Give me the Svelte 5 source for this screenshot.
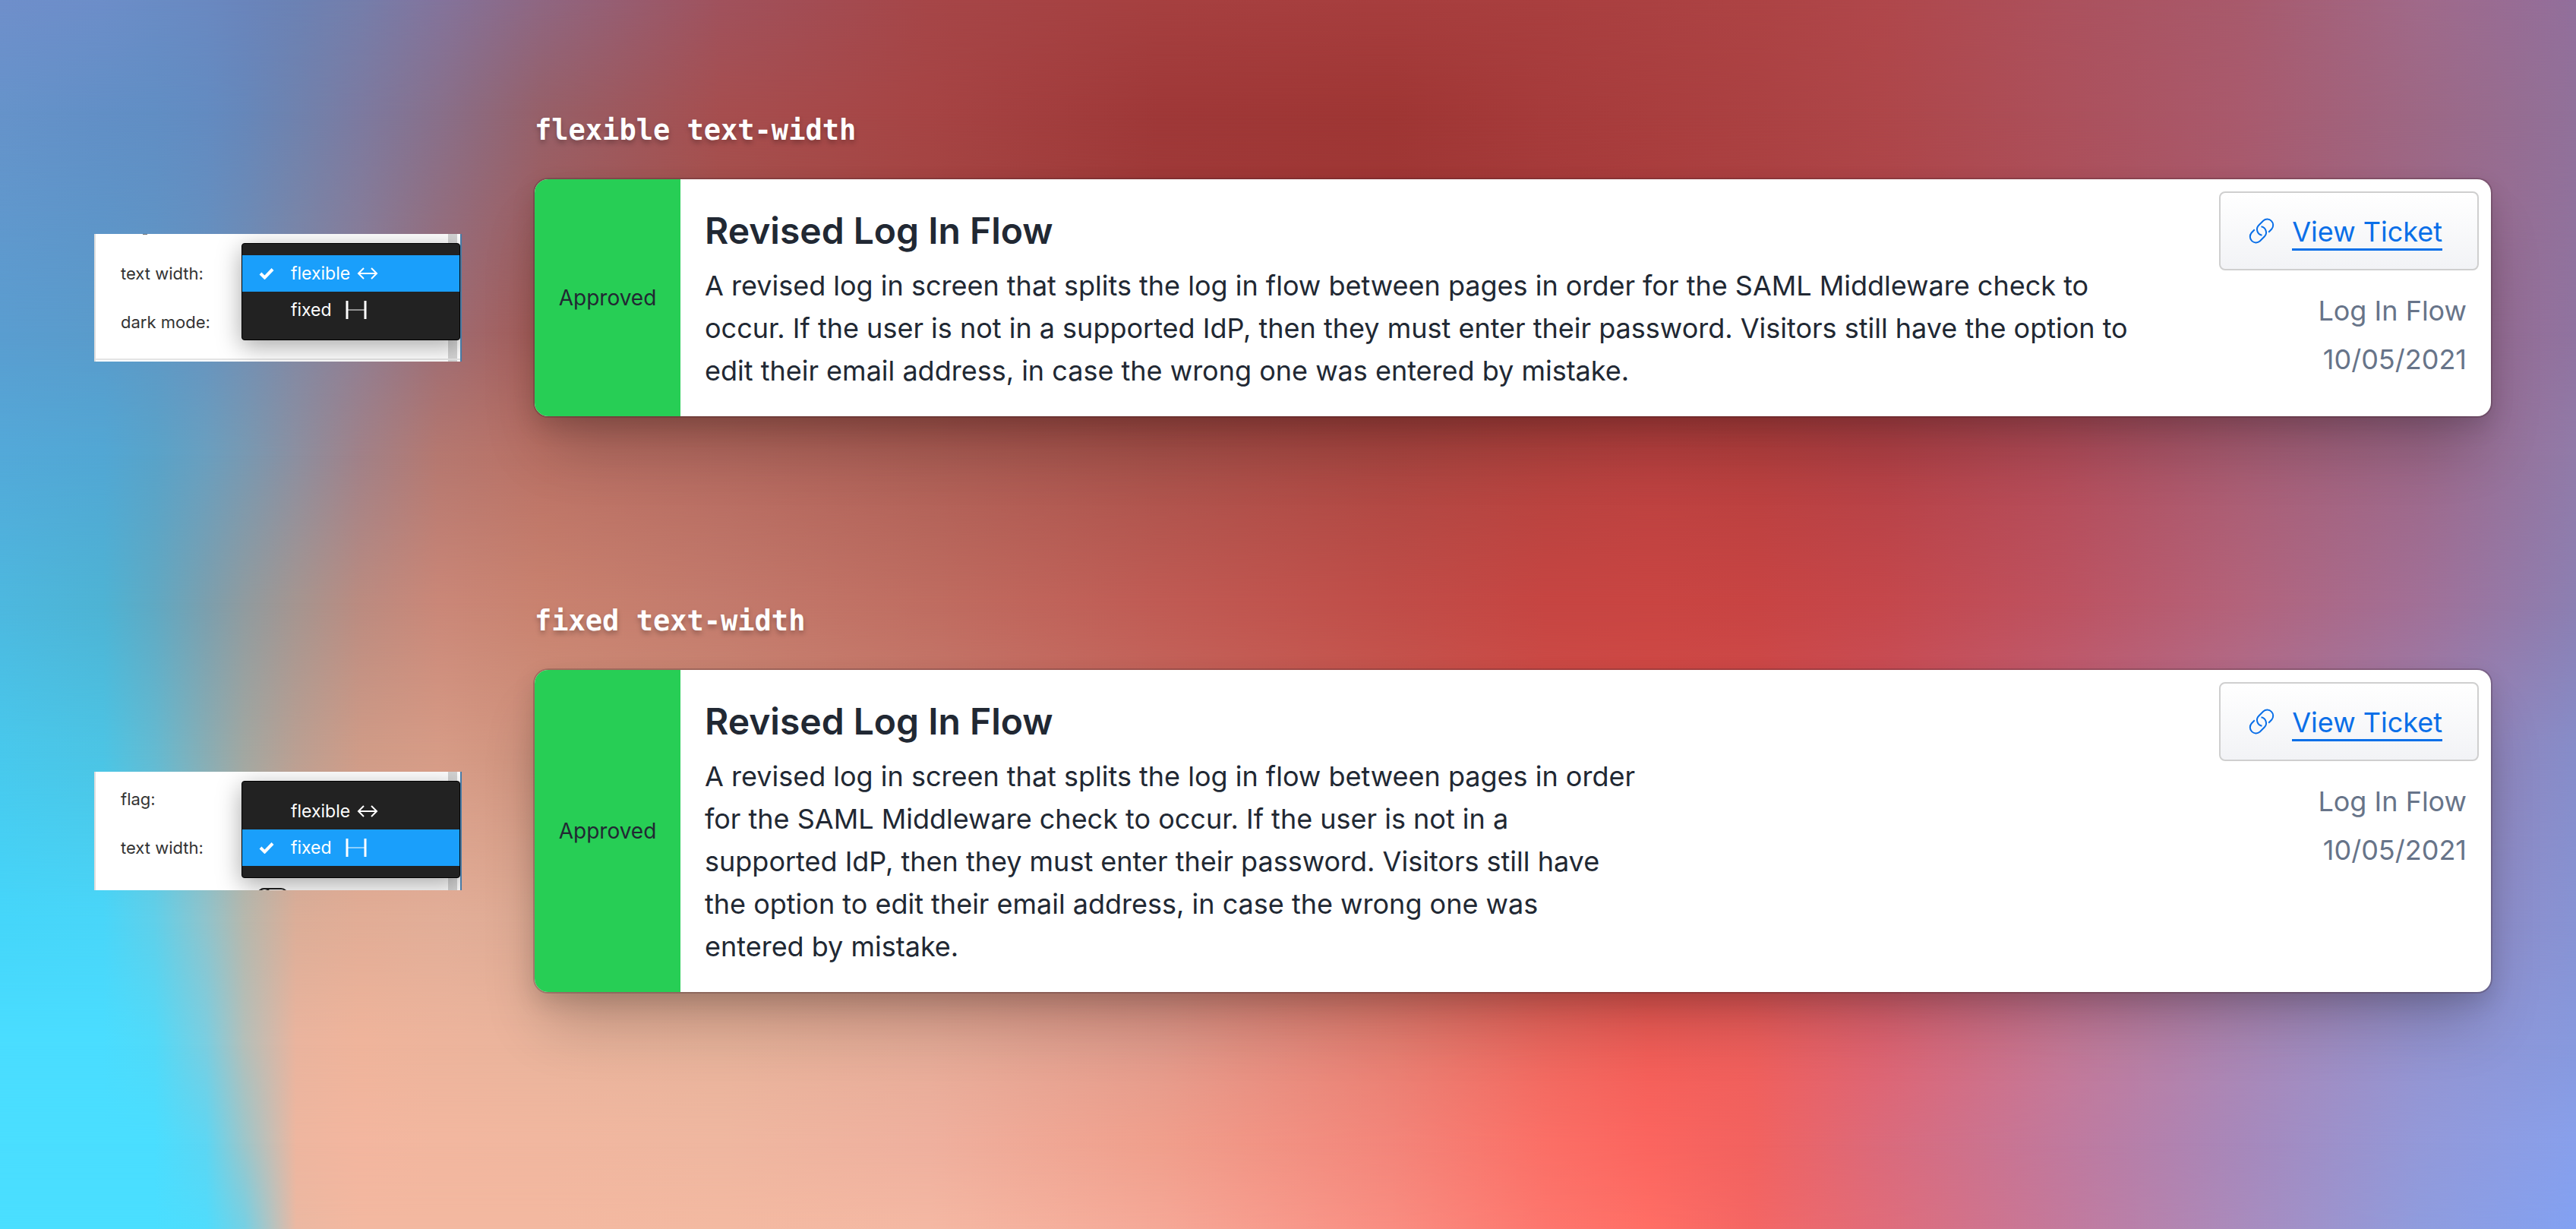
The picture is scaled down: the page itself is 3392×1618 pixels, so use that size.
<script>
  const description =
    'A revised log in screen that splits the log in flow between pages in order for the SAML Middleware check to occur. If the user is not in a supported IdP, then they must enter their password. Visitors still have the option to edit their email address, in case the wrong one was entered by mistake.';

  // Horizontal stops shared by every backdrop row, in percent of the width.
  const stops = [0, 4, 6, 8, 9.5, 11.5, 14, 17, 21, 28, 36, 45, 54, 60, 64, 68, 73, 80, 87, 94, 100];

  // Each row is a left-to-right blend; rows fade into one another from top to bottom.
  const rows = [
    { y: 0, c: ['#6f8fcb', '#6d8ec9', '#6a8cc5', '#6a89c1', '#6a85bc', '#6c82b4', '#757eab', '#83749c', '#8f6782', '#a0525d', '#a64648', '#a64040', '#a73e3e', '#a93f3f', '#ab4142', '#ad4344', '#b0474b', '#ac515d', '#a85a6c', '#a06a8a', '#926f9c'] },
    { y: 9, c: ['#6693ca', '#628fc6', '#618ec4', '#638bc1', '#6687ba', '#6f82ae', '#7c7aa0', '#88708b', '#966069', '#a64e4f', '#a64444', '#9f3838', '#9f3634', '#a63b3b', '#a93e3e', '#ab4142', '#ae4649', '#ac505b', '#a95a6d', '#9d6885', '#91719a'] },
    { y: 27, c: ['#5a9dd0', '#5a9bcb', '#5f98c6', '#6793bf', '#728fb4', '#8188a4', '#8f7e93', '#9c6c74', '#a85d58', '#a55449', '#a34641', '#9f3c39', '#a03937', '#a63a39', '#ab3d3c', '#ac4040', '#ae4449', '#ad4e58', '#a75a6e', '#9c688a', '#9073a0'] },
    { y: 37, c: ['#53a9d9', '#52a7d4', '#59a3c9', '#6a9fbf', '#7899b2', '#8c8fa0', '#a18188', '#b57870', '#ba7165', '#b56a60', '#ae5f56', '#a9524b', '#ac4742', '#b4433f', '#b94140', '#b7403f', '#b34146', '#b24c59', '#a85d73', '#9c6889', '#917ba9'] },
    { y: 49, c: ['#4db8df', '#4eb3d4', '#60a9c3', '#7b9fae', '#909b9f', '#a59590', '#bb8b80', '#ca8778', '#c9826f', '#c37a6c', '#bf6d61', '#c05b54', '#c04d48', '#c64542', '#c94542', '#c84443', '#c5474b', '#bd5260', '#b3637b', '#a17097', '#8c7fb2'] },
    { y: 61, c: ['#48c8ec', '#4cc4e4', '#64bad1', '#88adb4', '#a2a7a1', '#ba9f92', '#cf9b87', '#d69b86', '#cf927d', '#cd8b76', '#ca7e70', '#c76c61', '#cb5b52', '#d2504a', '#d54d49', '#d44e4d', '#ce535e', '#c2637a', '#b07396', '#9a80b0', '#868dca'] },
    { y: 75, c: ['#45d6fa', '#49d6f9', '#60d0ea', '#90c4cc', '#b7b8ad', '#dcae98', '#e2ad96', '#e2ae98', '#dfab94', '#dda38c', '#da9785', '#d68679', '#da6f63', '#e25c54', '#e6554f', '#e35657', '#d55e68', '#c46f8a', '#ac80a8', '#968ac2', '#8793d4'] },
    { y: 85, c: ['#4addff', '#4addff', '#50daf9', '#7acee1', '#b5bfb9', '#eab49e', '#efb49b', '#edb49c', '#eab49c', '#e8b39b', '#e6ac98', '#e29b8c', '#e77f72', '#ee685f', '#f25e58', '#ef5f5c', '#df6472', '#c67997', '#ab88b6', '#9494d1', '#8799de'] },
    { y: 93, c: ['#4adeff', '#4adeff', '#4adeff', '#5dd6f3', '#9dc6ca', '#eeb69f', '#f3b69f', '#f2b79f', '#f1b79f', '#efb7a0', '#efb09e', '#f09f8c', '#f3857a', '#fb6f66', '#fb655f', '#f2625f', '#db6a7b', '#c1799d', '#a788bb', '#9399d9', '#88a0ec'] },
    { y: 100, c: ['#4adeff', '#4adeff', '#4adeff', '#4fdcfc', '#75d0e4', '#ebb8a2', '#f3b8a0', '#f3b8a0', '#f3b8a0', '#f3b9a1', '#f4b8a3', '#f5a897', '#f98d81', '#fd766d', '#ff6e65', '#f46664', '#e06c7a', '#c3799c', '#a98bbd', '#8f9cde', '#82a1f2'] }
  ];

  function rowStyle(i) {
    const row = rows[i];
    const ramp = row.c.map((color, k) => `${color} ${stops[k]}%`).join(', ');
    const fade =
      i === 0 ? 'none' : `linear-gradient(to bottom, transparent ${rows[i - 1].y}%, black ${row.y}%)`;
    return `background-image: linear-gradient(to right, ${ramp}); mask-image: ${fade}`;
  }

  const demos = [
    {
      name: 'flexible text-width',
      fixed: false,
      labels: ['text width:', 'dark mode:']
    },
    {
      name: 'fixed text-width',
      fixed: true,
      labels: ['flag:', 'text width:', 'dark mode:']
    }
  ];
</script>

<div class="page">
  <div class="backdrop" aria-hidden="true">
    {#each rows as row, i (row.y)}
      <div class="band" style={rowStyle(i)}></div>
    {/each}
  </div>

  {#each demos as demo (demo.name)}
    <section class="demo" class:second={demo.fixed}>
      <h2 class="caption">{demo.name}</h2>

      <aside class="panel">
        <div class="labels">
          {#each demo.labels as label (label)}
            <span>{label}</span>
          {/each}
        </div>
        <div class="scrollbar"></div>
        {#if demo.fixed}
          <svg class="toggle" viewBox="0 0 44 22" aria-hidden="true">
            <rect x="2" y="2" width="40" height="18" rx="9" />
            <circle cx="11" cy="11" r="9" />
          </svg>
        {:else}
          <span class="descender" aria-hidden="true"></span>
          <span class="divider" aria-hidden="true"></span>
        {/if}
        <div class="menu" role="listbox" aria-label="text width">
          <button class="option" class:selected={!demo.fixed} role="option" aria-selected={!demo.fixed}>
            <svg class="check" viewBox="0 0 20 16" aria-hidden="true"><path d="M2 8l5.500 5.500L18 2.500" /></svg>
            <span>flexible</span>
            <svg class="arrows" viewBox="0 0 28 20" aria-hidden="true"><path d="M2 10H26M9 3L2 10l7 7M19 3l7 7-7 7" /></svg>
          </button>
          <button class="option" class:selected={demo.fixed} role="option" aria-selected={demo.fixed}>
            <svg class="check" viewBox="0 0 20 16" aria-hidden="true"><path d="M2 8l5.500 5.500L18 2.500" /></svg>
            <span>fixed</span>
            <svg class="bars" viewBox="0 0 28 24" aria-hidden="true"><path d="M2 0V24M26 0V24" /><path class="thin" d="M3 12H25" /></svg>
          </button>
        </div>
      </aside>

      <article class="card">
        <div class="status">Approved</div>
        <div class="body">
          <h3>Revised Log In Flow</h3>
          <p class:fixed={demo.fixed}>{description}</p>
        </div>
        <div class="side">
          <a class="ticket" href="#ticket">
            <svg class="link" viewBox="10 11 36 36" aria-hidden="true">
              <path d="M28.500 34.700A7.800 7.800 0 0 1 24.300 21.500L30.300 15.500A7.800 7.800 0 0 1 41.300 26.500L37.200 30.800" />
              <path d="M27.500 23.300A7.800 7.800 0 0 1 31.700 36.500L25.700 42.500A7.800 7.800 0 0 1 14.700 31.500L18.800 27.200" />
            </svg>
            <span>View Ticket</span>
          </a>
          <div class="meta">
            <span>Log In Flow</span>
            <time datetime="2021-10-05">10/05/2021</time>
          </div>
        </div>
      </article>
    </section>
  {/each}
</div>

<style>
  .page {
    position: relative;
    box-sizing: border-box;
    min-height: 100vh;
    padding: 148px 112px 148px 124px;
    overflow: hidden;
    font-family: Inter, 'Liberation Sans', sans-serif;
    color: #212833;
  }

  .backdrop,
  .band {
    position: absolute;
    inset: 0;
  }

  .demo {
    position: relative;
    display: grid;
    grid-template-columns: 484px 1fr;
    column-gap: 96px;
    align-items: center;
  }

  .second {
    margin-top: 246px;
  }

  .caption {
    grid-column: 2;
    margin: 0 0 40px;
    font-family: 'DejaVu Sans Mono', monospace;
    font-size: 37px;
    font-weight: 700;
    line-height: 48px;
    color: #fff;
    text-shadow: 0 4px 6px rgb(0 0 0 / 25%);
  }

  .panel {
    position: relative;
    grid-column: 1;
    box-sizing: border-box;
    height: 168px;
    overflow: hidden;
    background: #fff;
    border-left: 2px solid #dedede;
    border-right: 2px solid #477ba6;
    font-size: 22px;
  }

  .labels {
    display: grid;
    grid-auto-rows: 64px;
    align-items: center;
    padding: 20px 0 0 33px;
    color: #333;
  }

  .second .panel {
    height: 156px;
  }

  .second .labels {
    padding-top: 4px;
  }

  .descender {
    position: absolute;
    top: 0;
    left: 62px;
    width: 6px;
    height: 1px;
    background: #777;
  }

  .divider {
    position: absolute;
    right: 0;
    bottom: 2px;
    left: 0;
    height: 2px;
    background: #e4e4e4;
  }

  .scrollbar {
    position: absolute;
    top: 0;
    right: 4px;
    bottom: 0;
    width: 12px;
    background: #d4d4d4;
  }

  .toggle {
    position: absolute;
    left: 211px;
    top: 152px;
    width: 44px;
    fill: none;
    stroke: #222;
    stroke-width: 2;
  }

  .menu {
    position: absolute;
    top: 12px;
    right: 0;
    box-sizing: border-box;
    width: 288px;
    height: 128px;
    padding: 15px 0;
    background: #222;
    border: 1px solid #000;
    border-radius: 4px;
    box-shadow: 0 8px 32px rgb(0 0 0 / 35%);
  }

  .option {
    display: flex;
    align-items: center;
    box-sizing: border-box;
    width: 100%;
    height: 48px;
    padding: 0 0 0 22px;
    border: 0;
    background: none;
    font-family: inherit;
    font-size: 23px;
    color: #fff;
  }

  .selected {
    background: #1a9ffb;
  }

  .option svg {
    fill: none;
    stroke: #fff;
  }

  .check {
    width: 20px;
    margin-right: 22px;
    stroke-width: 4;
    visibility: hidden;
  }

  .selected .check {
    visibility: visible;
  }

  .option .check {
    stroke-width: 4;
  }

  .arrows {
    width: 28px;
    margin-left: 9px;
    stroke-width: 2;
  }

  .bars {
    width: 28px;
    margin-left: 18px;
    stroke-width: 3;
  }

  .bars .thin {
    stroke-width: 1;
  }

  .card {
    grid-column: 2;
    display: flex;
    overflow: hidden;
    border-radius: 18px;
    background: #fff;
    box-shadow:
      0 0 0 2px rgb(60 30 40 / 25%),
      0 52px 80px -12px rgb(0 0 0 / 20%),
      0 12px 32px rgb(0 0 0 / 14%);
  }

  .status {
    display: flex;
    align-items: center;
    justify-content: center;
    flex: none;
    width: 192px;
    background: #27ce55;
    font-size: 28px;
  }

  .body {
    flex: 1;
    padding: 38px 64px 32px 32px;
  }

  h3 {
    margin: 0 0 14px;
    font-size: 48px;
    font-weight: 600;
    line-height: 60px;
  }

  p {
    margin: 0;
    font-size: 36px;
    line-height: 56px;
  }

  p.fixed {
    max-width: 1232px;
  }

  .side {
    display: flex;
    flex-direction: column;
    flex: none;
    padding: 16px;
  }

  .ticket {
    display: flex;
    align-items: center;
    box-sizing: border-box;
    height: 104px;
    padding: 0 46px 0 36px;
    gap: 22px;
    border: 2px solid #cfcfcf;
    border-radius: 8px;
    background: linear-gradient(#fff, #f2f3f6);
    font-size: 36px;
    line-height: 44px;
    color: #0a6fe8;
    text-decoration: none;
  }

  .ticket span {
    padding-top: 4px;
    border-bottom: 3px solid #0a6fe8;
  }

  .link {
    width: 36px;
    fill: none;
    stroke: currentColor;
    stroke-width: 2;
  }

  .meta {
    display: flex;
    flex-direction: column;
    padding: 21px 16px 0 0;
    font-size: 36px;
    line-height: 64px;
    text-align: right;
    color: #677489;
  }
</style>
